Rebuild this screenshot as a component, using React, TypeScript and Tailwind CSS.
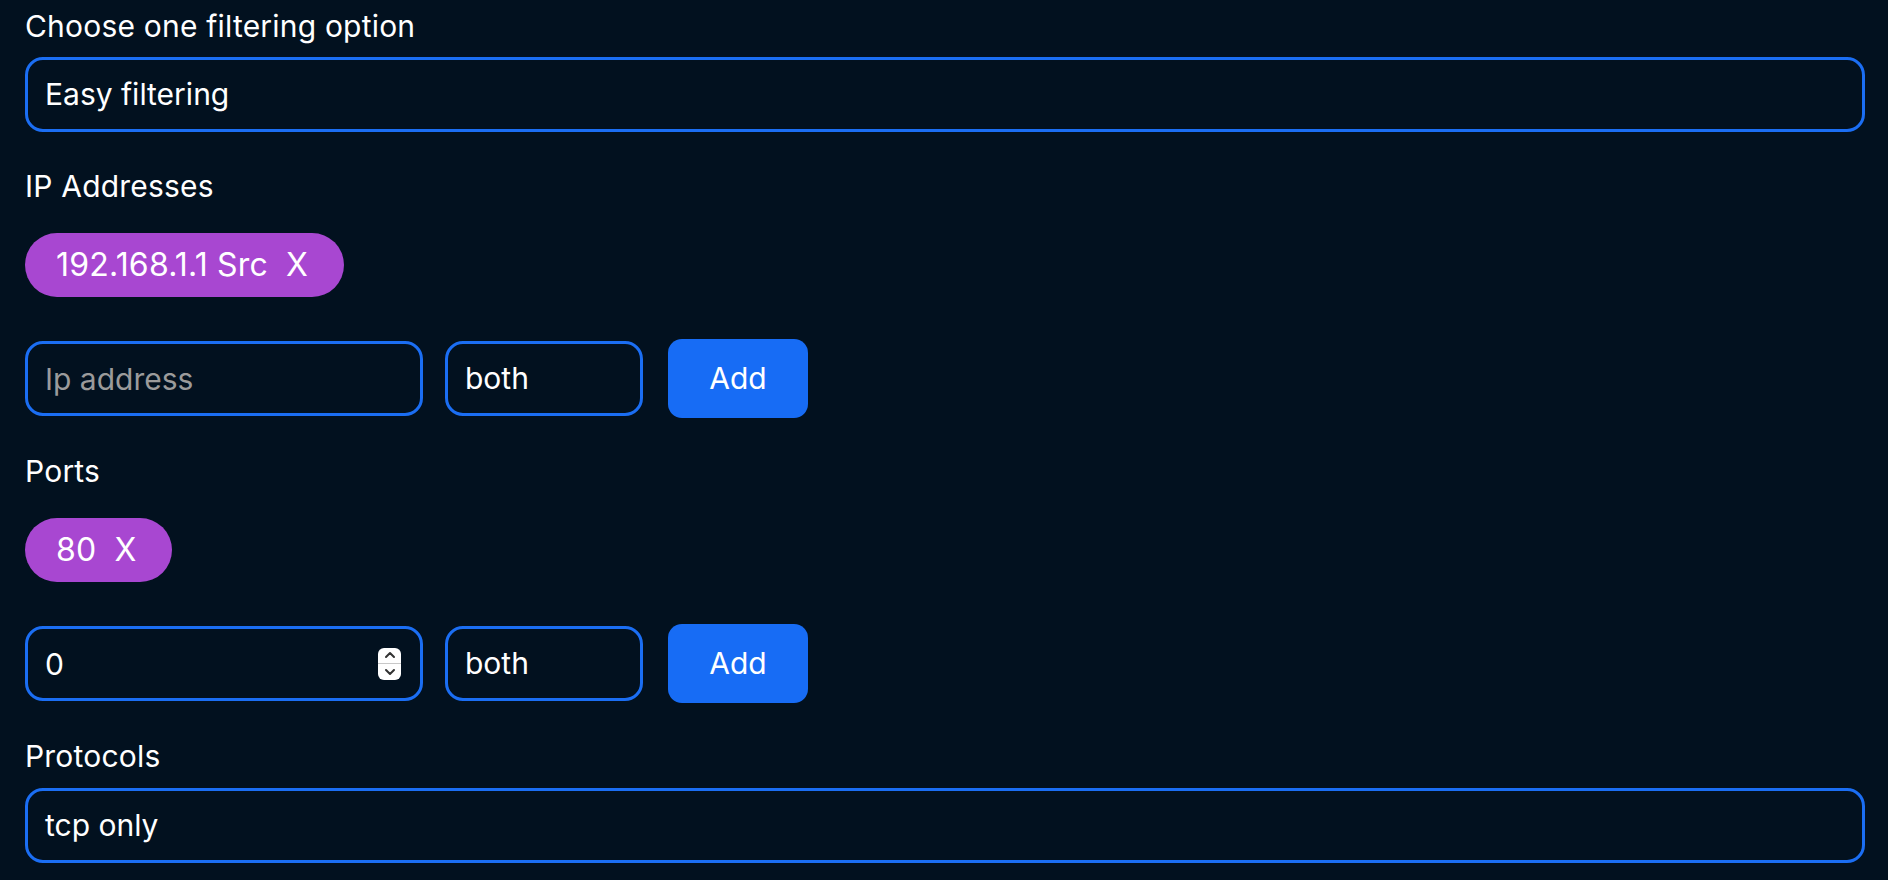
import React from "react";

const font = { fontFamily: "Inter, 'Noto Sans', sans-serif" };

function Chip({ label }: { label: string }) {
  return (
    <div className="flex h-[64px] items-center self-start rounded-full bg-[#a847d1] pl-[31px] pr-[36px] text-[32px] tracking-[0.2px] text-white">
      <span>{label}</span>
      <span className="ml-[18px]">X</span>
    </div>
  );
}

function Spinner() {
  return (
    <div className="pointer-events-none absolute right-[22px] top-1/2 flex h-[32px] w-[23px] -translate-y-1/2 flex-col overflow-hidden rounded-[6px] bg-white">
      <div className="flex flex-1 items-center justify-center border-b border-[#c8c8c8]">
        <svg width="12" height="8" viewBox="0 0 12 8">
          <path d="M2 6 L6 2 L10 6" fill="none" stroke="#333" strokeWidth="2" strokeLinecap="round" strokeLinejoin="round" />
        </svg>
      </div>
      <div className="flex flex-1 items-center justify-center">
        <svg width="12" height="8" viewBox="0 0 12 8">
          <path d="M2 2 L6 6 L10 2" fill="none" stroke="#333" strokeWidth="2" strokeLinecap="round" strokeLinejoin="round" />
        </svg>
      </div>
    </div>
  );
}

function AddRow({ number }: { number?: boolean }) {
  return (
    <div className="flex h-[79px] items-center">
      <div className="relative h-[75px] w-[398px]">
        {number ? (
          <>
            <input
              type="number"
              defaultValue={0}
              className="h-full w-full rounded-[18px] border-[3px] border-[#1b6ef3] bg-transparent pl-[17px] text-[30px] text-white outline-none [appearance:textfield] [&::-webkit-inner-spin-button]:appearance-none [&::-webkit-outer-spin-button]:appearance-none"
              style={font}
            />
            <Spinner />
          </>
        ) : (
          <input
            type="text"
            placeholder="Ip address"
            className="h-full w-full rounded-[18px] border-[3px] border-[#1b6ef3] bg-transparent pl-[17px] text-[30px] text-white outline-none placeholder:text-[#9b9b9b]"
            style={font}
          />
        )}
      </div>
      <select
        className="ml-[22px] h-[75px] w-[198px] appearance-none rounded-[18px] border-[3px] border-[#1b6ef3] bg-transparent pl-[17px] text-[30px] text-white outline-none"
        style={font}
        defaultValue="both"
      >
        <option value="both">both</option>
        <option value="src">src</option>
        <option value="dst">dst</option>
      </select>
      <button
        className="ml-[25px] h-[79px] w-[140px] rounded-[14px] bg-[#176cf5] text-[30px] text-white"
        style={font}
      >
        Add
      </button>
    </div>
  );
}

function Label({ children, className = "" }: { children: React.ReactNode; className?: string }) {
  return <div className={`h-[36px] text-[30px] leading-[36px] tracking-[0.2px] text-white ${className}`}>{children}</div>;
}

function Box({ value }: { value: string }) {
  return (
    <div className="flex h-[75px] w-[1840px] items-center rounded-[18px] border-[3px] border-[#1b6ef3] pl-[17px] text-[30px] text-white">
      {value}
    </div>
  );
}

export default function App() {
  return (
    <div className="min-h-[880px] w-full bg-[#02111f] pl-[25px] pt-[8px]" style={font}>
      <div className="flex flex-col">
        <Label>Choose one filtering option</Label>
        <div className="mt-[13px]">
          <Box value="Easy filtering" />
        </div>
        <Label className="mt-[36px]">IP Addresses</Label>
        <div className="mt-[29px] flex">
          <Chip label="192.168.1.1 Src" />
        </div>
        <div className="mt-[42px]">
          <AddRow />
        </div>
        <Label className="mt-[35px]">Ports</Label>
        <div className="mt-[29px] flex">
          <Chip label="80" />
        </div>
        <div className="mt-[42px]">
          <AddRow number />
        </div>
        <Label className="mt-[35px]">Protocols</Label>
        <div className="mt-[14px]">
          <Box value="tcp only" />
        </div>
      </div>
    </div>
  );
}
